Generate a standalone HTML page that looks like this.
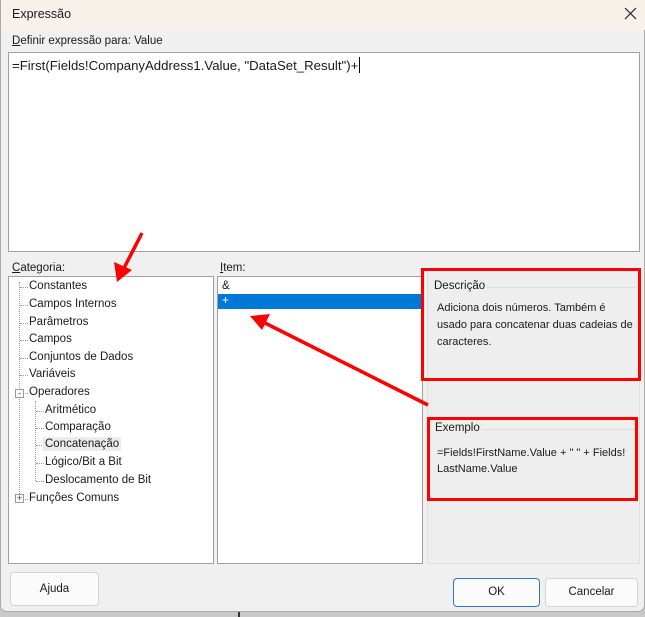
<!DOCTYPE html>
<html><head><meta charset="utf-8"><style>
*{margin:0;padding:0;box-sizing:border-box}
body{width:645px;height:617px;background:#c9c9c9;position:relative;overflow:hidden;font-family:"Liberation Sans",sans-serif;font-size:11.5px;color:#1a1a1a}
.dlg{position:absolute;left:0;top:0;width:645px;height:612px;background:#f0f0f0;border-radius:0 0 7px 7px;border:1px solid #aaa;border-top:none}
.title{position:absolute;left:0;top:0;width:645px;height:30px;background:#f8f1ea}
.a{position:absolute;white-space:nowrap}
.box{position:absolute;background:#fff;border:1px solid #a0a0a0}
.btn{position:absolute;background:#fbfbfb;border:1px solid #d4d4d4;border-radius:4px;text-align:center}
.red{position:absolute;border:3px solid #f00}
.dot{position:absolute;border-left:1px dotted #999}
.hd{position:absolute;border-top:1px dotted #999;width:8px}
</style></head><body>
<div class="dlg">
<div class="title"></div>
<div class="a" style="left:11px;top:7px;font-size:12.5px">Expressão</div>
<svg class="a" style="left:623px;top:7px" width="13" height="13"><path d="M1 1L12 12M12 1L1 12" stroke="#222" stroke-width="1.2"/></svg>
<div class="a" style="left:11px;top:35px"><u>D</u>efinir expressão para: Value</div>
<div class="box" style="left:7px;top:52px;width:632px;height:200px"></div>
<div class="a" style="left:11px;top:57px;font-size:13.2px">=First(Fields!CompanyAddress1.Value, "DataSet_Result")+<span style="display:inline-block;width:1px;height:16px;background:#000;vertical-align:-3px;margin-left:1px"></span></div>
<div class="a" style="left:11px;top:262px"><u>C</u>ategoria:</div>
<div class="box" style="left:7px;top:276px;width:206px;height:288px"></div>
<div class="dot" style="left:18px;top:282px;height:216px"></div>
<div class="dot" style="left:34px;top:401px;height:80px"></div>
<div class="hd" style="left:19px;top:287px"></div><div class="hd" style="left:19px;top:305px"></div><div class="hd" style="left:19px;top:323px"></div><div class="hd" style="left:19px;top:340px"></div><div class="hd" style="left:19px;top:358px"></div><div class="hd" style="left:19px;top:375px"></div><div class="hd" style="left:19px;top:393px"></div><div class="hd" style="left:19px;top:499px"></div>
<div class="hd" style="left:35px;top:411px"></div><div class="hd" style="left:35px;top:428px"></div><div class="hd" style="left:35px;top:445px"></div><div class="hd" style="left:35px;top:463px"></div><div class="hd" style="left:35px;top:481px"></div>
<div class="a" style="left:14px;top:389px;width:9px;height:9px;border:1px solid #999;background:#fff;font-size:9px;line-height:6px;text-align:center;color:#333">-</div>
<div class="a" style="left:14px;top:494px;width:9px;height:9px;border:1px solid #999;background:#fff;font-size:9px;line-height:7px;text-align:center;color:#333">+</div>
<div class="a" style="left:28px;top:280px">Constantes</div>
<div class="a" style="left:28px;top:298px">Campos Internos</div>
<div class="a" style="left:28px;top:316px">Parâmetros</div>
<div class="a" style="left:28px;top:333px">Campos</div>
<div class="a" style="left:28px;top:351px">Conjuntos de Dados</div>
<div class="a" style="left:28px;top:368px">Variáveis</div>
<div class="a" style="left:28px;top:386px">Operadores</div>
<div class="a" style="left:44px;top:404px">Aritmético</div>
<div class="a" style="left:44px;top:421px">Comparação</div>
<div class="a" style="left:42px;top:437px;background:#ececec;padding:1px 2px">Concatenação</div>
<div class="a" style="left:44px;top:456px">Lógico/Bit a Bit</div>
<div class="a" style="left:44px;top:474px">Deslocamento de Bit</div>
<div class="a" style="left:28px;top:492px">Funções Comuns</div>
<div class="a" style="left:219px;top:262px"><u>I</u>tem:</div>
<div class="box" style="left:216px;top:276px;width:206px;height:288px"></div>
<div class="a" style="left:221px;top:280px">&amp;</div>
<div class="a" style="left:217px;top:294px;width:204px;height:15px;background:#0078d7;color:#fff;padding-left:4px;line-height:14px">+</div>
<div class="a" style="left:426px;top:270px;width:213px;height:294px;background:#eeeeee;border:1px solid #e0e0e0"></div>
<div class="a" style="left:432px;top:287px;width:203px;border-top:1px solid #ddd"></div>
<div class="a" style="left:431px;top:280px;background:#eee;padding:0 2px">Descrição</div>
<div class="a" style="left:436px;top:300px;line-height:17px;white-space:normal;width:200px;font-size:11px">Adiciona dois números. Também é usado para concatenar duas cadeias de caracteres.</div>
<div class="a" style="left:432px;top:429px;width:203px;border-top:1px solid #ddd"></div>
<div class="a" style="left:432px;top:422px;background:#eee;padding:0 2px">Exemplo</div>
<div class="a" style="left:436px;top:445px;line-height:16px;font-size:11px">=Fields!FirstName.Value + " " + Fields!<br>LastName.Value</div>
<div class="red" style="left:420px;top:268px;width:220px;height:113px"></div>
<div class="red" style="left:426px;top:417px;width:211px;height:84px"></div>
<div class="btn" style="left:9px;top:572px;width:89px;height:34px;line-height:32px">Ajuda</div>
<div class="btn" style="left:452px;top:578px;width:87px;height:29px;line-height:27px;border-color:#2d77c7">OK</div>
<div class="btn" style="left:544px;top:578px;width:93px;height:29px;line-height:27px">Cancelar</div>
</div>
<div class="a" style="left:238px;top:612px;width:2px;height:5px;background:#333"></div>
<svg class="a" style="left:0;top:0" width="645" height="617">
<path d="M142 233L124 268" stroke="#f00" stroke-width="3.5"/>
<path d="M117 282L114 262L132 270Z" fill="#f00"/>
<path d="M428 405L265 323" stroke="#f00" stroke-width="3.5"/>
<path d="M250 316L270 314L262 330Z" fill="#f00"/>
</svg>
</body></html>
